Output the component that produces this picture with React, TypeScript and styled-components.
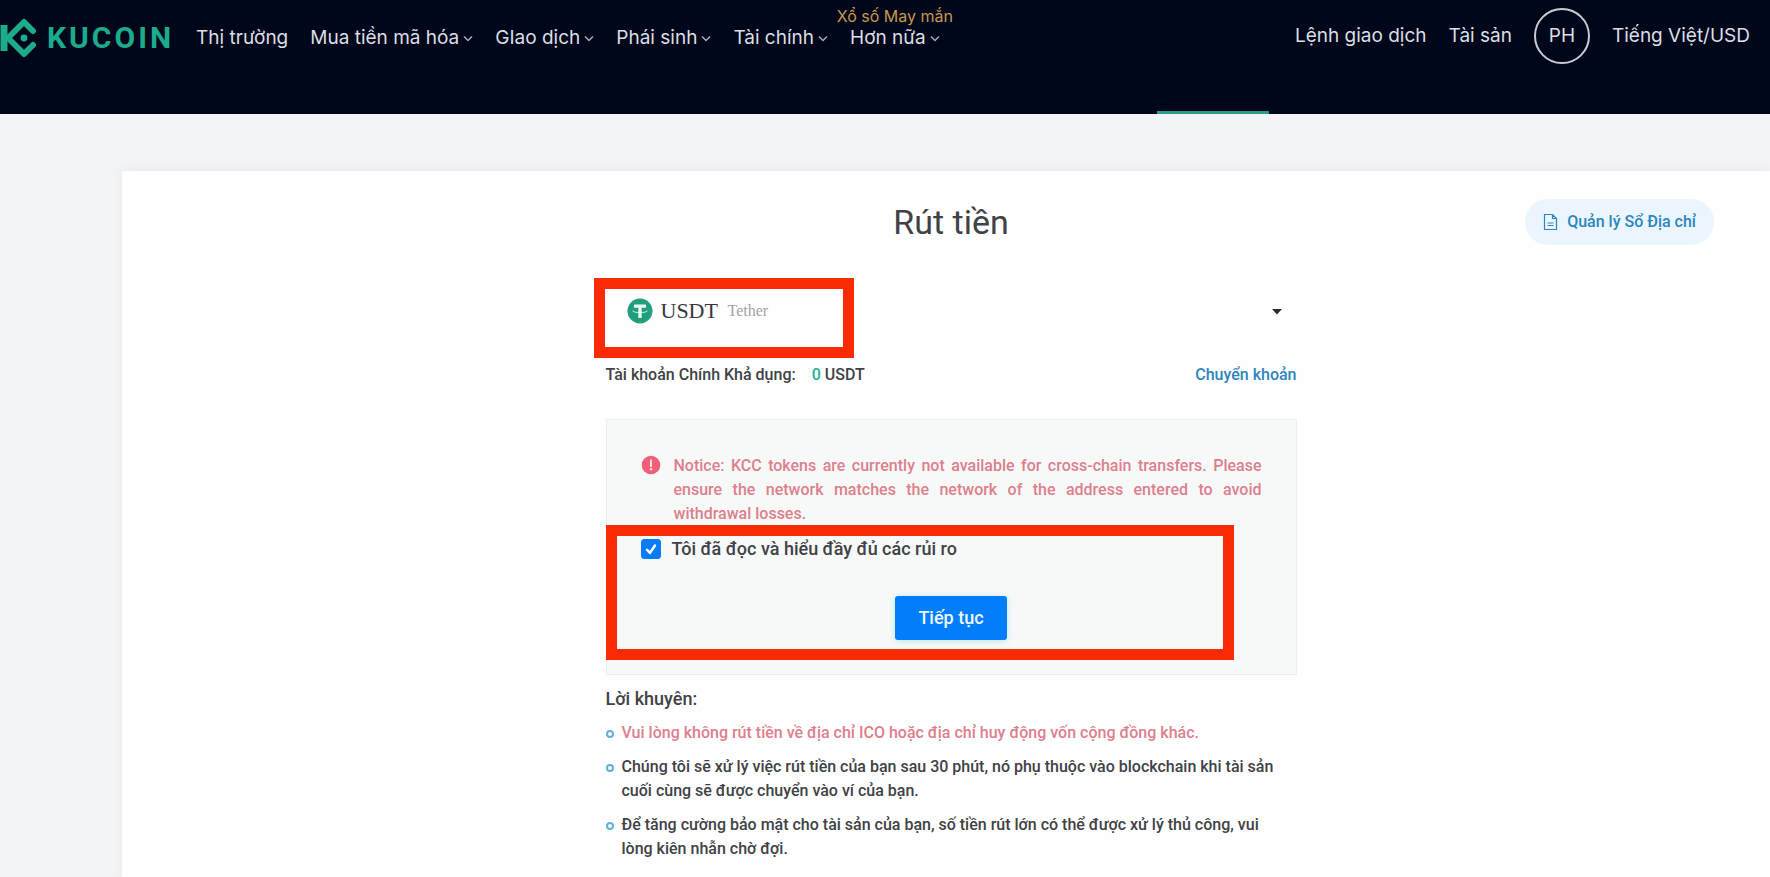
import React, { useState } from "react";
import styled, { createGlobalStyle } from "styled-components";

const Global = createGlobalStyle`
  *, *::before, *::after { box-sizing: border-box; }
  body {
    margin: 0;
    background: #f3f4f8;
    color: #404246;
    font-family: Roboto, "Liberation Sans", sans-serif;
    font-size: 16px;
    font-weight: 500;
    line-height: 24px;
  }
  a { color: inherit; text-decoration: none; }
`;

const Page = styled.div`
  display: flex;
  flex-direction: column;
  min-height: 100vh;
`;

const Header = styled.header`
  display: flex;
  flex-direction: column;
  justify-content: space-between;
  height: 114px;
  background: #00071a;
  color: #dcdee3;
  font-family: Inter, "Liberation Sans", sans-serif;
  font-size: 19px;
  font-weight: 400;
`;

const TopBar = styled.div`
  display: flex;
  align-items: center;
  justify-content: space-between;
  height: 76px;
  padding-right: 20px;
  white-space: nowrap;
`;

const NavGroup = styled.nav`
  display: flex;
  align-items: center;
  gap: 22px;
`;

const UserGroup = styled(NavGroup)`
  padding-bottom: 4px;
`;

const Logo = styled.a`
  display: flex;
  align-items: center;
  gap: 9px;
  color: #1cab8b;
  font-family: Roboto, sans-serif;
  font-size: 30px;
  font-weight: 700;
  letter-spacing: 3px;
  line-height: 40px;
`;

const NavLink = styled.a`
  position: relative;
  display: flex;
  align-items: center;
  gap: 4px;
`;

const Promo = styled.span`
  position: absolute;
  bottom: 100%;
  left: 50%;
  transform: translateX(-50%);
  color: #c9974f;
  font-size: 16px;
  line-height: 20px;
`;

const Avatar = styled.button`
  width: 56px;
  height: 56px;
  padding: 0;
  border: 2px solid #c9ccd2;
  border-radius: 50%;
  background: transparent;
  color: inherit;
  font: inherit;
`;

const TabTrack = styled.div`
  display: flex;
  justify-content: flex-end;
  padding-right: 501px;
`;

const ActiveTab = styled.span`
  width: 112px;
  height: 3px;
  background: #2a9d85;
`;

const Main = styled.main`
  display: flex;
  flex: 1;
  padding: 57px 0 0 122px;
`;

const Card = styled.section`
  flex: 1;
  padding: 28px 56px 16px 66px;
  background: #fefefe;
  box-shadow: 0 0 10px rgba(60, 60, 40, 0.08);
`;

const CardHead = styled.div`
  display: grid;
  grid-template-columns: 1fr auto 1fr;
  align-items: center;
  margin-bottom: 44px;
`;

const Title = styled.h1`
  grid-column: 2;
  margin: 0;
  font-size: 34px;
  font-weight: 400;
  line-height: 40px;
`;

const AddressButton = styled.button`
  display: flex;
  align-items: center;
  justify-self: end;
  gap: 9px;
  height: 46px;
  padding: 0 18px;
  border: 0;
  border-radius: 23px;
  background: #eaf5fd;
  color: #2c86bd;
  font: inherit;
`;

const Column = styled.div`
  max-width: 691px;
  margin: 0 auto;
`;

const Highlight = styled.div`
  position: absolute;
  border: 11px solid #f82b04;
  pointer-events: none;
`;

const CoinHighlight = styled(Highlight)`
  top: -11px;
  left: -12px;
  width: 260px;
  height: 80px;
`;

const ConfirmHighlight = styled(Highlight)`
  top: 105px;
  left: -1px;
  width: 628px;
  height: 135px;
`;

const CoinField = styled.div`
  position: relative;
  display: grid;
  align-items: center;
  height: 44px;
  margin-bottom: 30px;
  font-family: "Liberation Serif", serif;
  font-weight: 400;

  > :not(${Highlight}) { grid-area: 1 / 1; }
`;

const CoinSelect = styled.select`
  width: 100%;
  height: 44px;
  padding: 0 0 2px 55px;
  border: 0;
  appearance: none;
  background: transparent;
  color: #37393d;
  font-family: inherit;
  font-size: 22px;
`;

const CoinIcon = styled.svg`
  margin-left: 21px;
  pointer-events: none;
`;

const CoinName = styled.span`
  margin-left: 122px;
  color: #a3a3a3;
  font-size: 16px;
  pointer-events: none;
`;

const Caret = styled.svg`
  justify-self: end;
  margin-right: 14px;
  pointer-events: none;
`;

const BalanceRow = styled.div`
  display: flex;
  justify-content: space-between;
  margin-bottom: 32px;
`;

const Amount = styled.span`
  margin-left: 16px;
  color: #24b394;
`;

const TransferLink = styled.a`
  color: #2c86bd;
`;

const NoticeBox = styled.div`
  position: relative;
  display: flex;
  flex-direction: column;
  margin-bottom: 12px;
  padding: 34px;
  border: 1px solid #eceff0;
  background: #f7f9f9;
`;

const Notice = styled.div`
  display: flex;
  gap: 13px;
  margin-bottom: 11px;
  color: #dd7f8c;

  svg { flex: none; margin-top: 1px; }
`;

const NoticeText = styled.p`
  margin: 0;
  text-align: justify;
`;

const CheckLabel = styled.label`
  display: flex;
  align-items: center;
  align-self: flex-start;
  gap: 11px;
  margin-bottom: 35px;
  font-size: 18px;
`;

const Checkbox = styled.input`
  width: 20px;
  height: 20px;
  margin: 0;
  border: 1px solid #9aa3ad;
  border-radius: 3px;
  appearance: none;
  background: #fff;

  &:checked {
    border-color: #0a7cf8;
    background: #0a7cf8;
  }
`;

const CheckWrap = styled.span`
  display: grid;

  > * { grid-area: 1 / 1; }
  svg { pointer-events: none; }
`;

const SubmitButton = styled.button`
  align-self: center;
  height: 44px;
  padding: 0 23px;
  border: 0;
  border-radius: 3px;
  background: #027efb;
  box-shadow: 0 1px 6px rgba(0, 170, 220, 0.25);
  color: #eef7ff;
  font: inherit;
  font-size: 18px;
`;

const TipsTitle = styled.h2`
  margin: 0 0 10px;
  font-size: 18px;
  font-weight: 500;
  line-height: 24px;
`;

const Tips = styled.ul`
  display: flex;
  flex-direction: column;
  gap: 10px;
  margin: 0;
  padding: 0 10px 0 0;
  list-style: none;
`;

const Tip = styled.li<{ $warn?: boolean }>`
  display: flex;
  gap: 8px;
  color: ${(p) => (p.$warn ? "#dd7f8c" : "inherit")};

  &::before {
    content: "";
    flex: none;
    width: 8px;
    height: 8px;
    margin-top: 9px;
    border: 2px solid #62afd8;
    border-radius: 50%;
  }
`;

const Chevron = () => (
  <svg width="10" height="8" viewBox="0 0 10 8" fill="none" stroke="#a9adb5" strokeWidth="1.5" aria-hidden="true">
    <path d="M1 2.5l4 4 4-4" />
  </svg>
);

const menus = ["Mua tiền mã hóa", "GIao dịch", "Phái sinh", "Tài chính"];

export default function App() {
  const [accepted, setAccepted] = useState(true);

  return (
    <Page>
      <Global />
      <Header>
        <TopBar>
          <NavGroup>
            <Logo href="#">
              <svg width="38" height="40" viewBox="0 0 38 40" fill="none" stroke="currentColor" strokeWidth="6" strokeLinecap="round" strokeLinejoin="round" aria-hidden="true">
                <path d="M4 7v26" strokeWidth="7" strokeLinecap="butt" />
                <path d="M33 13L24 4 8 20l16 16 9-9" />
                <circle cx="24" cy="20" r="3.4" fill="currentColor" stroke="none" />
              </svg>
              KUCOIN
            </Logo>
            <NavLink href="#">Thị trường</NavLink>
            {menus.map((m) => (
              <NavLink href="#" key={m}>
                {m}
                <Chevron />
              </NavLink>
            ))}
            <NavLink href="#">
              <Promo>Xổ số May mắn</Promo>
              Hơn nữa
              <Chevron />
            </NavLink>
          </NavGroup>
          <UserGroup>
            <NavLink href="#">Lệnh giao dịch</NavLink>
            <NavLink href="#">Tài sản</NavLink>
            <Avatar type="button">PH</Avatar>
            <NavLink href="#">Tiếng Việt/USD</NavLink>
          </UserGroup>
        </TopBar>
        <TabTrack>
          <ActiveTab />
        </TabTrack>
      </Header>

      <Main>
        <Card>
          <CardHead>
            <Title>Rút tiền</Title>
            <AddressButton type="button">
              <svg width="15" height="18" viewBox="0 0 15 18" fill="none" stroke="currentColor" strokeWidth="1.2" aria-hidden="true">
                <path d="M1.5 1.5h8l4 4v11h-12z M9.5 1.5v4h4 M4.5 10h6 M4.5 12.5h6" />
              </svg>
              Quản lý Sổ Địa chỉ
            </AddressButton>
          </CardHead>

          <Column>
            <CoinField>
              <CoinSelect aria-label="Tether">
                <option>USDT</option>
              </CoinSelect>
              <CoinIcon width="26" height="26" viewBox="0 0 26 26" aria-hidden="true">
                <circle cx="13" cy="13" r="12.5" fill="#1f9f7c" />
                <path d="M7 6.5h12v3.3h-4.3V20h-3.4V9.8H7z" fill="#e9f7f2" />
                <path d="M5.5 12.6c0 2.6 15 2.6 15 0" fill="none" stroke="#e9f7f2" strokeWidth="0.9" />
              </CoinIcon>
              <CoinName>Tether</CoinName>
              <Caret width="12" height="7" viewBox="0 0 12 7" aria-hidden="true">
                <path d="M1 1h10L6 6.5z" fill="#2b2b2e" />
              </Caret>
              <CoinHighlight />
            </CoinField>

            <BalanceRow>
              <span>
                Tài khoản Chính Khả dụng:
                <Amount>0</Amount> USDT
              </span>
              <TransferLink href="#">Chuyển khoản</TransferLink>
            </BalanceRow>

            <NoticeBox>
              <Notice>
                <svg width="20" height="20" viewBox="0 0 20 20" aria-hidden="true">
                  <circle cx="10" cy="10" r="9.3" fill="#ee5f78" />
                  <path d="M10 5.2v6" stroke="#fbdfe3" strokeWidth="2" strokeLinecap="round" />
                  <circle cx="10" cy="14.3" r="1.2" fill="#fbdfe3" />
                </svg>
                <NoticeText>
                  Notice: KCC tokens are currently not available for cross-chain transfers. Please ensure the network
                  matches the network of the address entered to avoid withdrawal losses.
                </NoticeText>
              </Notice>
              <CheckLabel>
                <CheckWrap>
                  <Checkbox type="checkbox" checked={accepted} onChange={(e) => setAccepted(e.target.checked)} />
                  {accepted && (
                    <svg width="20" height="20" viewBox="0 0 20 20" fill="none" stroke="#fff" strokeWidth="2.4" strokeLinecap="round" aria-hidden="true">
                      <path d="M6 10.8l3 3L14 6.5" />
                    </svg>
                  )}
                </CheckWrap>
                Tôi đã đọc và hiểu đầy đủ các rủi ro
              </CheckLabel>
              <SubmitButton type="button">Tiếp tục</SubmitButton>
              <ConfirmHighlight />
            </NoticeBox>

            <TipsTitle>Lời khuyên:</TipsTitle>
            <Tips>
              <Tip $warn>Vui lòng không rút tiền về địa chỉ ICO hoặc địa chỉ huy động vốn cộng đồng khác.</Tip>
              <Tip>
                Chúng tôi sẽ xử lý việc rút tiền của bạn sau 30 phút, nó phụ thuộc vào blockchain khi tài sản cuối cùng
                sẽ được chuyển vào ví của bạn.
              </Tip>
              <Tip>
                Để tăng cường bảo mật cho tài sản của bạn, số tiền rút lớn có thể được xử lý thủ công, vui lòng kiên
                nhẫn chờ đợi.
              </Tip>
            </Tips>
          </Column>
        </Card>
      </Main>
    </Page>
  );
}
